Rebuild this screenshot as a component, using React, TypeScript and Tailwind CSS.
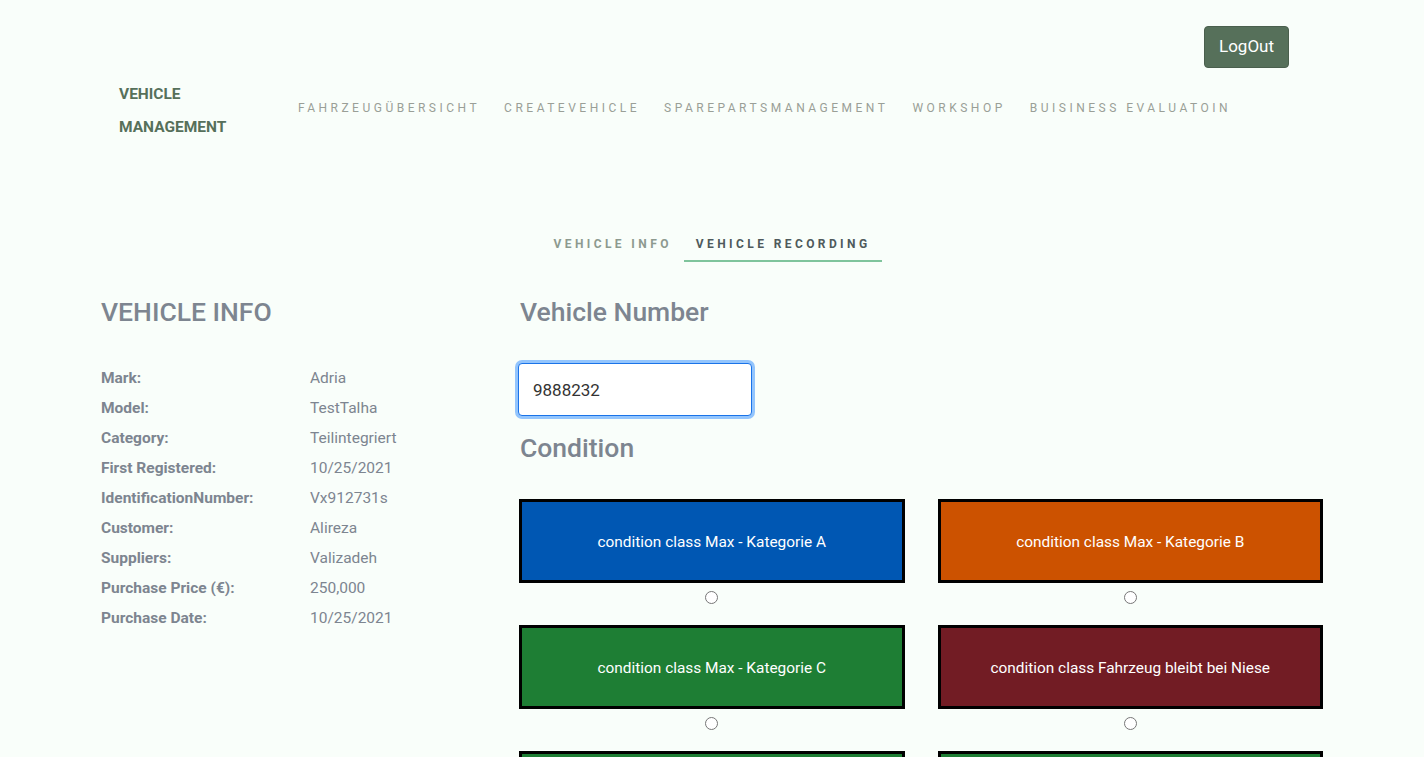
import React from 'react';

const navItems = ['FAHRZEUGÜBERSICHT', 'CREATEVEHICLE', 'SPAREPARTSMANAGEMENT', 'WORKSHOP', 'BUISINESS EVALUATOIN'];

const info: [string, string][] = [
  ['Mark:', 'Adria'],
  ['Model:', 'TestTalha'],
  ['Category:', 'Teilintegriert'],
  ['First Registered:', '10/25/2021'],
  ['IdentificationNumber:', 'Vx912731s'],
  ['Customer:', 'Alireza'],
  ['Suppliers:', 'Valizadeh'],
  ['Purchase Price (€):', '250,000'],
  ['Purchase Date:', '10/25/2021'],
];

const conditions = [
  { label: 'condition class Max - Kategorie A', bg: 'bg-[#0057b3]' },
  { label: 'condition class Max - Kategorie B', bg: 'bg-[#cc5200]' },
  { label: 'condition class Max - Kategorie C', bg: 'bg-[#1e7e34]' },
  { label: 'condition class Fahrzeug bleibt bei Niese', bg: 'bg-[#721c24]' },
  { label: 'condition class Max - Kategorie D', bg: 'bg-[#1e7e34]' },
  { label: 'condition class Max - Kategorie E', bg: 'bg-[#1e7e34]' },
];

export default function App() {
  return (
    <div className="h-[757px] overflow-hidden bg-[#f9fefa] font-['Roboto',sans-serif]">
      {/* Header */}
      <header className="pt-[26px]">
        <div className="flex justify-end pr-[135px]">
          <button className="h-[42px] w-[85px] rounded-[4px] border border-[#4a5f4d] bg-[#56705a] text-[17px] text-white">
            LogOut
          </button>
        </div>
        <div className="mt-[10px] flex items-start pl-[119px]">
          <div className="w-[179px] text-[15.5px] font-bold leading-[33px] text-[#56705a]">
            <div>VEHICLE</div>
            <div>MANAGEMENT</div>
          </div>
          <nav className="mt-[21px] flex items-center gap-[24px]">
            {navItems.map((item) => (
              <a key={item} className="text-[12px] leading-[18px] tracking-[3.5px] text-[#9a9f97]">
                {item}
              </a>
            ))}
          </nav>
        </div>
      </header>

      {/* Tabs */}
      <div className="mt-[91px] flex justify-center">
        <div className="flex">
          <div className="border-b-2 border-transparent px-[12px] pb-[7px] text-[12px] font-bold leading-[18px] tracking-[3.4px] text-[#8d9a8f]">
            VEHICLE INFO
          </div>
          <div className="border-b-2 border-[#7fc49c] px-[12px] pb-[7px] text-[12px] font-bold leading-[18px] tracking-[3.4px] text-[#4f5a5c]">
            VEHICLE RECORDING
          </div>
        </div>
      </div>

      {/* Content */}
      <div className="mt-[35px] flex pl-[101px]">
        <div className="w-[419px]">
          <h2 className="text-[26.5px] font-medium leading-[30px] text-[#7d8590]">VEHICLE INFO</h2>
          <div className="mt-[37px] flex flex-col">
            {info.map(([k, v]) => (
              <div key={k} className="flex h-[30px] items-center text-[15.5px] text-[#7d8590]">
                <span className="w-[209px] font-bold">{k}</span>
                <span>{v}</span>
              </div>
            ))}
          </div>
        </div>

        <div className="w-[803px]">
          <h2 className="text-[26.5px] font-medium leading-[30px] text-[#7d8590]">Vehicle Number</h2>
          <input
            defaultValue="9888232"
            className="mt-[36px] -ml-[2px] h-[53px] w-[234px] rounded-[4px] border border-[#1a73e8] bg-white px-[14px] text-[17px] text-[#333] outline-none ring-[3px] ring-[#93c5fd]"
          />
          <h2 className="mt-[17px] text-[26.5px] font-medium leading-[30px] text-[#7d8590]">Condition</h2>
          <div className="mt-[36px] -ml-[1px] grid grid-cols-2 gap-x-[33px] gap-y-[21px]">
            {conditions.map((c) => (
              <div key={c.label} className="flex flex-col items-center">
                <div className={`flex h-[84px] w-full items-center justify-center border-[3px] border-black pt-[3px] ${c.bg} text-[15.4px] text-white`}>
                  {c.label}
                </div>
                <input type="radio" name="condition" className="mt-[8px] h-[13px] w-[13px]" />
              </div>
            ))}
          </div>
        </div>
      </div>
    </div>
  );
}
